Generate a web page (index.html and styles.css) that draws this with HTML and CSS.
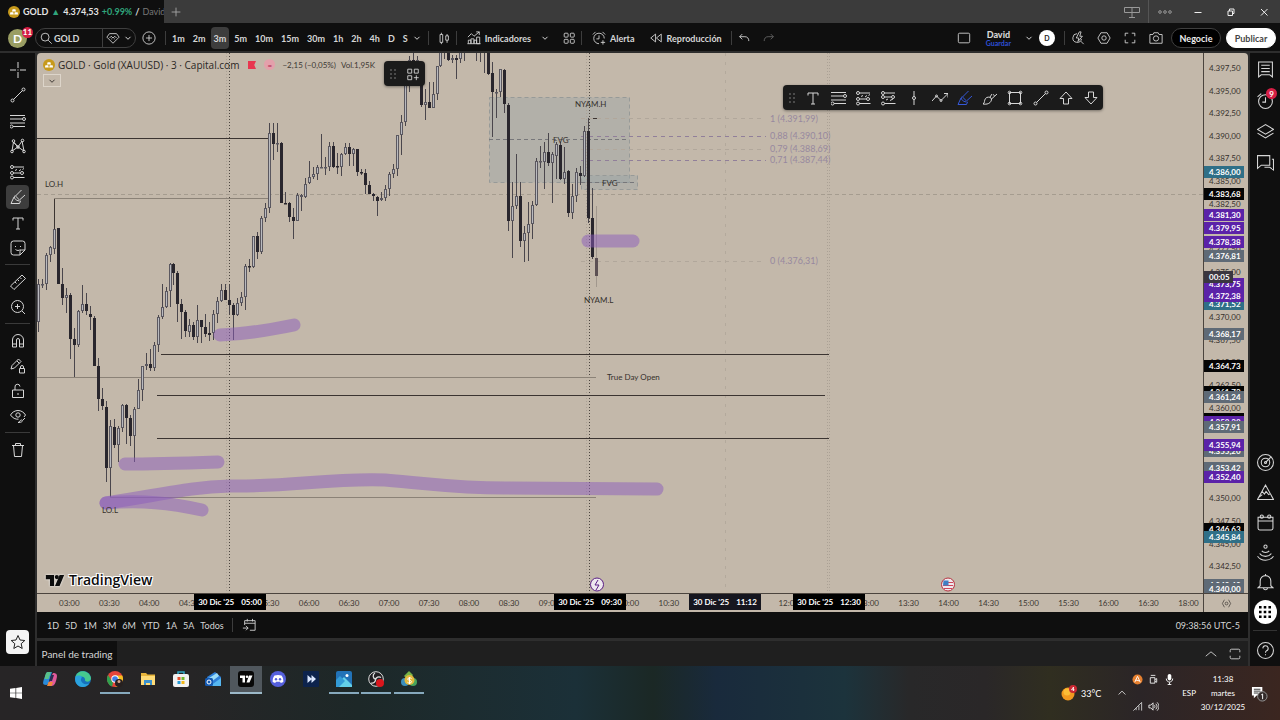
FILE: index.html
```html
<!DOCTYPE html>
<html lang="es">
<head>
  <meta charset="UTF-8">
  <meta name="viewport" content="width=device-width, initial-scale=1.0">
  <title>GOLD 4.374,53 +0.99% / David</title>
  <link rel="stylesheet" href="styles.css">
</head>
<body>
  <svg class="sprite" aria-hidden="true">
    <symbol id="chevron" viewBox="0 0 8 8"><path d="M1.5 2.8 4 5.3 6.5 2.8"/></symbol>
    <symbol id="coin" viewBox="0 0 12 12"><circle cx="6" cy="6" r="6" fill="#c79a1c" stroke="none"/><path d="M4.6 3.2h2.8L8 5.6H4zM2.4 6.2h2.8l.6 2.4H1.9zM6.8 6.2h2.8l.5 2.4H6.2z" fill="#fff" stroke="none"/></symbol>
    <symbol id="layout" viewBox="0 0 16 16"><rect x="2.5" y="2.5" width="4.5" height="4.5" rx="1"/><rect x="9.5" y="2.5" width="4.5" height="4.5" rx="1"/><rect x="2.5" y="9.5" width="4.5" height="4.5" rx="1"/><rect x="9.5" y="9.5" width="4.5" height="4.5" rx="1"/></symbol>
    <symbol id="text" viewBox="0 0 16 16"><path d="M3 5.5V3h10v2.5M8 3v11M6 14h4"/></symbol>
    <symbol id="trend" viewBox="0 0 16 16"><path d="m3.5 12.500 9-9"/><circle cx="2.500" cy="13.500" r="1.500"/><circle cx="13.500" cy="2.500" r="1.500"/></symbol>
    <symbol id="fib" viewBox="0 0 16 16"><path d="M0 2.500h15M0 6h12.500M0 10h15M3 13.500h12"/><circle cx="14" cy="6" r="1.500"/><circle cx="1.500" cy="13.500" r="1.500"/></symbol>
    <symbol id="position" viewBox="0 0 16 16"><path d="M3.500 3H14M3.500 9H10M3.500 13.500h11M5 6.500l2-1M9 7l2-1.500M12.500 5.500l1.500-1"/><circle cx="2" cy="3" r="1.500"/><circle cx="2" cy="9" r="1.500"/><circle cx="2" cy="13.500" r="1.500"/><circle cx="12" cy="9" r="1.500"/></symbol>
    <symbol id="marker" viewBox="0 0 16 16"><path d="M5.500 7 11.500 1M10 10.500l5-4.500M5 6.500c-1.500 2 0 5 4.500 5.500M4 8 1 14.500h8.500L10.500 12M5.500 7l4.500 4.500"/></symbol>
    <symbol id="brush" viewBox="0 0 16 16"><path d="M1 14c2-1 1-3.500 2.500-5.500S8 7 9 8s.5 3-1 4.500S4 14.500 1 14zM8 7l2-3M9.500 9l5.500-5M11 4.500l1.500 1"/></symbol>
    <symbol id="user-tv" viewBox="0 0 20 12"><path d="M0 0h9v12H4.500V4.500H0zM15 0h5l-5 12h-5z" stroke="none"/><circle cx="12" cy="2.300" r="2.300" stroke="none"/></symbol>
  </svg>

  <header class="tabs">
    <div class="tab">
      <svg class="coin"><use href="#coin"/></svg>
      <b>GOLD</b><i class="up">▲</i><b>4.374,53</b><b class="up">+0.99%</b><b>/</b><span class="fade">David</span>
    </div>
    <button class="new-tab" aria-label="Nueva pestaña"><svg class="icon" viewBox="0 0 16 16"><path d="M8 3v10M3 8h10"/></svg></button>
    <div class="window-buttons">
      <button aria-label="Disposición"><svg class="icon" viewBox="0 0 16 16"><path d="M.500 3.500h15v5H.500zM8 3.500v10M5 13.500h6"/></svg></button>
      <button class="edge" aria-label="Menú"><svg class="icon" viewBox="0 0 16 16"><circle cx="3" cy="8" r="1.300"/><circle cx="8" cy="8" r="1.300"/><circle cx="13" cy="8" r="1.300"/></svg></button>
      <button aria-label="Minimizar"><svg class="icon light" viewBox="0 0 16 16"><path d="M4.500 8.500h7"/></svg></button>
      <button aria-label="Restaurar"><svg class="icon light" viewBox="0 0 16 16"><path d="M5 7h4.500v4.500H5zM6.500 7V5H11v4.500H9.500"/></svg></button>
      <button aria-label="Cerrar"><svg class="icon light" viewBox="0 0 16 16"><path d="m5 5 6.500 6.500M11.500 5 5 11.500"/></svg></button>
    </div>
  </header>

  <div class="toolbar">
    <button class="avatar" aria-label="Perfil">D<span class="badge">11</span></button>
    <div class="search">
      <button><svg class="icon" viewBox="0 0 16 16"><circle cx="7" cy="7" r="4.500"/><path d="m10.500 10.500 4 4"/></svg>GOLD</button>
      <button class="gem" aria-label="Opciones"><svg class="icon" viewBox="0 0 16 16"><path d="M4 3h8l3 4-7 7-7-7zM4 8l2-2 2 2 2-2 2 2M6.500 8.500v1M9.500 8.500v1"/></svg><svg class="chev"><use href="#chevron"/></svg></button>
    </div>
    <button class="tool" aria-label="Comparar"><svg class="icon" viewBox="0 0 16 16"><circle cx="8" cy="8" r="7"/><path d="M8 4.500v7M4.500 8h7"/></svg></button>
    <span class="sep"></span>
    <div class="intervals">
      <button>1m</button><button>2m</button><button class="on">3m</button><button>5m</button><button>10m</button><button>15m</button><button>30m</button><button>1h</button><button>2h</button><button>4h</button><button>D</button><button>S</button>
    </div>
    <svg class="chev"><use href="#chevron"/></svg>
    <span class="sep"></span>
    <button class="tool" aria-label="Velas"><svg class="icon" viewBox="0 0 16 16"><path d="M3.500 4h3v9h-3zM5 2v2M5 13v2M10 5.500h3v5h-3zM11.500 3.500v2M11.500 10.500v3"/></svg></button>
    <span class="sep"></span>
    <button class="wide"><svg class="icon" viewBox="0 0 16 16"><path d="m1 7 4-4 3 3 6-5M10.500 1H14v3.500M1.500 14.500v-4h3v4M4.500 14.500V9H8v5.500M8 14.500v-4h3v4M11 14.500V7h3.500v7.500zM.500 14.500h15"/></svg>Indicadores</button>
    <svg class="chev"><use href="#chevron"/></svg>
    <button class="tool" aria-label="Plantillas"><svg class="icon"><use href="#layout"/></svg></button>
    <span class="sep"></span>
    <button class="wide"><svg class="icon" viewBox="0 0 16 16"><path d="M14 8.500A6 6 0 1 0 8 14.500M8 5v4H5M1 4l3-3M12 1l3 3M12.500 10.500v5M10 13h5"/></svg>Alerta</button>
    <button class="wide replay"><svg class="icon" viewBox="0 0 16 16"><path d="M7.500 3.500v9L2 8zM14 3.500v9L8.500 8z"/></svg>Reproducción</button>
    <span class="sep"></span>
    <button class="tool" aria-label="Deshacer"><svg class="icon" viewBox="0 0 16 16"><path d="M6 3.500 3 6.500l3 3M3 6.500h6c3 0 4.500 2 4.500 5"/></svg></button>
    <button class="tool dim" aria-label="Rehacer"><svg class="icon" viewBox="0 0 16 16"><path d="m10 3.500 3 3-3 3M13 6.500H7c-3 0-4.500 2-4.500 5"/></svg></button>

    <div class="toolbar-right">
      <button class="tool" aria-label="Cuadrícula"><svg class="icon" viewBox="0 0 16 16"><rect x="1.500" y="2.500" width="13" height="11" rx="1.500"/></svg></button>
      <button class="save"><b>David</b><span>Guardar</span></button>
      <svg class="chev"><use href="#chevron"/></svg>
      <button class="initial">D</button>
      <span class="sep"></span>
      <button class="tool" aria-label="Búsqueda rápida"><svg class="icon" viewBox="0 0 16 16"><path d="M7 3a5 5 0 1 0 5 6M11 11.500l3.500 3.500M9.500 1 6 8h3l-1 4 5-6h-3l1.500-5z"/></svg></button>
      <button class="tool" aria-label="Ajustes"><svg class="icon" viewBox="0 0 16 16"><path d="M4.500 2h7L15 8l-3.500 6h-7L1 8z"/><circle cx="8" cy="8" r="2.500"/></svg></button>
      <button class="tool" aria-label="Pantalla completa"><svg class="icon" viewBox="0 0 16 16"><path d="M2.500 6V2.500H6M10 2.500h3.500V6M13.500 10v3.500H10M6 13.500H2.500V10"/></svg></button>
      <button class="tool" aria-label="Captura"><svg class="icon" viewBox="0 0 16 16"><path d="M1 4h3.500l1-2h5l1 2H15v10H1z"/><circle cx="8" cy="8.500" r="3"/></svg></button>
      <button class="pill">Negocie</button>
      <button class="pill white">Publicar</button>
    </div>
  </div>

  <div class="workspace">
    <nav class="drawing">
      <div class="group main-tools">
        <button aria-label="Cruz"><svg class="icon" viewBox="0 0 16 16"><path d="M8 0v6M8 10v6M0 8h6M10 8h6M8 7.500v1"/></svg></button>
        <button aria-label="Línea de tendencia"><svg class="icon"><use href="#trend"/></svg></button>
        <button aria-label="Fibonacci"><svg class="icon"><use href="#fib"/></svg></button>
        <button aria-label="Patrones"><svg class="icon" viewBox="0 0 16 16"><path d="m2 13 1.500-9L8 9l4-6 2 10-6-4zM3.500 4 8 9"/><circle cx="2" cy="13.500" r="1.300"/><circle cx="3.500" cy="3" r="1.300"/><circle cx="12.500" cy="2.500" r="1.300"/><circle cx="14" cy="13.500" r="1.300"/><circle cx="8" cy="9" r="1.300"/></svg></button>
        <button aria-label="Posición"><svg class="icon"><use href="#position"/></svg></button>
        <button class="on" aria-label="Marcador"><svg class="icon"><use href="#marker"/></svg></button>
        <button aria-label="Texto"><svg class="icon"><use href="#text"/></svg></button>
        <button aria-label="Pegatinas"><svg class="icon" viewBox="0 0 16 16"><path d="M3.500 1h9A2.500 2.500 0 0 1 15 3.500V10l-5 5H3.500A2.500 2.500 0 0 1 1 12.500v-9A2.500 2.500 0 0 1 3.500 1zM15 10h-3.500a1.500 1.500 0 0 0-1.500 1.500V15M5.500 6v1M10.500 6v1M5.500 9.500c1.500 1.300 3.500 1.300 5 0"/></svg></button>
      </div>
      <div class="group">
        <button aria-label="Medir"><svg class="icon" viewBox="0 0 16 16"><path d="m.500 12 11.500-11L15.500 4.500 4 15.500zM5 8l1.500 1.500M7.500 5.500 9 7M10 3.500 11.500 5"/></svg></button>
        <button aria-label="Acercar"><svg class="icon" viewBox="0 0 16 16"><circle cx="7.500" cy="7.500" r="6"/><path d="m12 12 3 3M7.500 5v5M5 7.500h5"/></svg></button>
      </div>
      <div class="group">
        <button aria-label="Imán"><svg class="icon" viewBox="0 0 16 16"><path d="M2.500 14V7a5.500 5.500 0 0 1 11 0v7h-4V7a1.500 1.500 0 0 0-3 0v7zM2.500 11h4M9.500 11h4"/></svg></button>
        <button aria-label="Dibujo continuo"><svg class="icon" viewBox="0 0 16 16"><path d="m1 11 1-3.500L8.500 1 11 3.500 4.500 10zM7 3l2.500 2.500M9.500 10.500h5v4.500h-5zM10.500 10.500V9a1.500 1.500 0 0 1 3 0v1.500"/></svg></button>
        <button aria-label="Bloquear"><svg class="icon" viewBox="0 0 16 16"><path d="M2.500 7h11v7.500h-11zM5 7V4a2.500 2.500 0 0 1 5-.500M8 10v2"/></svg></button>
        <button aria-label="Ocultar"><svg class="icon" viewBox="0 0 16 16"><path d="M8.500 11.200C5.500 11.500 2.500 10 .500 7c3.500-6 11.500-6 15 0l-1.500 2M8 14.500c2 0 1.500-2.500 3.500-2.500s1.500 2.500-3.500 2.500zM13 12l2-2"/><circle cx="8" cy="7" r="2.200"/></svg></button>
      </div>
      <div class="group">
        <button aria-label="Eliminar"><svg class="icon" viewBox="0 0 16 16"><path d="M2 3.500h12M5.500 3.500V1.500h5v2M3.500 3.500l1 11h7l1-11"/></svg></button>
      </div>
      <button class="favorite" aria-label="Favoritos"><svg class="icon" viewBox="0 0 16 16"><path d="m8 1.500 2 4.500 4.800.500-3.600 3.200 1 4.800L8 12l-4.200 2.500 1-4.800L1.200 6.500 6 6z"/></svg></button>
    </nav>

    <main>
      <div class="chart-grid">
        <section class="chart">
          <svg class="plot" id="plot" viewBox="37 53 1166 540" preserveAspectRatio="xMinYMin slice">
            <g class="zones">
              <rect x="489.500" y="97.500" width="140" height="85"/>
              <rect x="581.500" y="175.500" width="56" height="14"/>
              <path d="M489 139.500h140M581 182.500h56"/>
            </g>
            <g class="sessions">
              <path d="M229.500 53v540M589.500 53v540"/>
              <path class="soft" d="M226.500 53v540M586.500 53v540M829.500 53v540M827.500 53v540"/>
              <path class="cross" d="M37 194.500h1166"/>
              <path class="faint" d="M725.500 53v540"/>
            </g>
            <g class="levels">
              <path d="M37 138.500h231M54.500 229V199M161 354.500h668M157 395.500h668M157 438.500h672M589 118.500h8"/>
              <path class="thin" d="M54 198.500h214M37 377.500h559M110 497.500h486"/>
            </g>
            <g class="retracement">
              <path d="M581 118.500h180M581 149.500h180M581 261.500h180"/>
              <path class="strong" d="M581 136.500h185M581 160.500h185"/>
              <text x="770" y="122">1 (4.391,99)</text>
              <text x="770" y="139">0,88 (4.390,10)</text>
              <text x="770" y="152">0,79 (4.388,69)</text>
              <text x="770" y="163">0,71 (4.387,44)</text>
              <text x="770" y="264">0 (4.376,31)</text>
            </g>
            <g id="candles"></g>
            <g class="highlighter">
              <path d="M220 335c26-1 50-5 74-10"/>
              <path d="M125 464c30 0 62-1 93-2"/>
              <path d="M106 503c54-8 84-16 124-17 60 1 100-8 155-6 50 4 70 8 120 8l152 1"/>
              <path d="M106 503c36-3 64 0 96 7"/>
              <path d="M588 241h45"/>
            </g>
            <g class="notes">
              <text x="45" y="187">LO.H</text>
              <text x="102" y="513">LO.L</text>
              <text x="575" y="107">NYAM.H</text>
              <text x="584" y="303">NYAM.L</text>
              <text x="553" y="143">FVG</text>
              <text x="602" y="186">FVG</text>
              <text x="607" y="380">True Day Open</text>
            </g>
            <g class="events">
              <circle cx="597" cy="584.500" r="6.500" stroke="#5b1f86"/>
              <path d="m598 580-3 5h4l-3 5" stroke="#5b1f86"/>
              <circle cx="948" cy="584.500" r="6.500" stroke="#b8323e"/>
              <path d="M944 582.500h9M943 585.500h10M944 588.500h8" stroke="#d0475a"/>
              <path d="M943.500 580.500h5v5h-5.500z" fill="#3e7fc4"/>
            </g>
          </svg>

          <div class="legend">
            <div class="legend-row">
              <svg class="coin"><use href="#coin"/></svg>
              <h1>GOLD · Gold (XAUUSD) · 3 · Capital.com</h1>
              <svg class="flag" viewBox="0 0 9 9"><path d="M0 0h9L7 4.500 9 9H0z"/></svg>
              <span class="equal">=</span>
              <span>−2,15 (−0,05%)</span>
              <span>Vol.1,95K</span>
            </div>
            <button class="collapse" aria-label="Contraer"><svg class="chev"><use href="#chevron"/></svg></button>
          </div>

          <div class="floating favorites">
            <span class="grip"></span>
            <button aria-label="Diseños"><svg class="icon" viewBox="0 0 16 16"><path d="M2 2.500h4.500V7H2zM9.500 2.500H14V7H9.500zM2 10h4.500v4.500H2zM11.800 9.500v5.500M9 12.200h5.500"/></svg></button>
          </div>

          <div class="floating tools">
            <span class="grip"></span>
            <button aria-label="Texto"><svg class="icon"><use href="#text"/></svg></button>
            <button aria-label="Fibonacci"><svg class="icon"><use href="#fib"/></svg></button>
            <button aria-label="Posición larga"><svg class="icon"><use href="#position"/></svg></button>
            <button aria-label="Posición corta"><svg class="icon" viewBox="0 0 16 16"><path d="M3.500 3H14M3.500 7H10M3.500 13.500h11M5 10l2-1M9 10.500l3-1.500"/><circle cx="2" cy="3" r="1.500"/><circle cx="2" cy="7" r="1.500"/><circle cx="2" cy="13.500" r="1.500"/><circle cx="12" cy="7" r="1.500"/></svg></button>
            <button aria-label="Línea vertical"><svg class="icon" viewBox="0 0 16 16"><path d="M8 1v5.500M8 9.500V15"/><circle cx="8" cy="8" r="1.500"/></svg></button>
            <button aria-label="Trayectoria"><svg class="icon" viewBox="0 0 16 16"><path d="m0 11 4.500-5L9 10.500 15.500 4M12 3.500h4v4"/><circle cx="4.500" cy="6" r="1"/><circle cx="9" cy="10.500" r="1"/></svg></button>
            <button class="active" aria-label="Marcador"><svg class="icon"><use href="#marker"/></svg></button>
            <button aria-label="Pincel"><svg class="icon"><use href="#brush"/></svg></button>
            <button aria-label="Rectángulo"><svg class="icon" viewBox="0 0 16 16"><path d="M2.500 2.500h11v11h-11z"/><circle cx="2.500" cy="2.500" r="1.300"/><circle cx="13.500" cy="2.500" r="1.300"/><circle cx="2.500" cy="13.500" r="1.300"/><circle cx="13.500" cy="13.500" r="1.300"/></svg></button>
            <button aria-label="Línea de tendencia"><svg class="icon"><use href="#trend"/></svg></button>
            <button aria-label="Flecha arriba"><svg class="icon" viewBox="0 0 16 16"><path d="m8 2 6 6.500h-3.500V14h-5V8.500H2z"/></svg></button>
            <button aria-label="Flecha abajo"><svg class="icon" viewBox="0 0 16 16"><path d="m8 14 6-6.500h-3.500V2h-5v5.500H2z"/></svg></button>
          </div>

          <a class="brand" href="#"><svg><use href="#user-tv"/></svg>TradingView</a>
        </section>

        <svg class="prices" id="prices" viewBox="1204 53 44 540" preserveAspectRatio="xMinYMin slice"></svg>

        <div class="times">
          <span>03:00</span><span>03:30</span><span>04:00</span><span>04:30</span><span>05:00</span><span>05:30</span><span>06:00</span><span>06:30</span><span>07:00</span><span>07:30</span><span>08:00</span><span>08:30</span><span>09:00</span><span>09:30</span><span>10:00</span><span>10:30</span><span>11:00</span><span>11:30</span><span>12:00</span><span>12:30</span><span>13:00</span><span>13:30</span><span>14:00</span><span>14:30</span><span>15:00</span><span>15:30</span><span>16:00</span><span>16:30</span><span>18:00</span>
          <div class="time-tag at-0500"><span>30 Dic '25</span><span>05:00</span></div>
          <div class="time-tag at-0930"><span>30 Dic '25</span><span>09:30</span></div>
          <div class="time-tag at-1112"><span>30 Dic '25</span><span>11:12</span></div>
          <div class="time-tag at-1230"><span>30 Dic '25</span><span>12:30</span></div>
        </div>
        <button class="axis-settings" aria-label="Ajustes del eje"><svg class="icon" viewBox="0 0 16 16"><path d="M5 2.500 2 8l3 5.500M11 2.500 14 8l-3 5.500"/><circle cx="8" cy="8" r="2"/></svg></button>
      </div>

      <div class="ranges">
        <button>1D</button><button>5D</button><button>1M</button><button>3M</button><button>6M</button><button>YTD</button><button>1A</button><button>5A</button><button>Todos</button>
        <span class="sep"></span>
        <button aria-label="Ir a"><svg class="icon" viewBox="0 0 16 16"><path d="M3 8V3h12v11H9M3 6h12M6 1v3M12 1v3M1 11.500h6M4.500 9 7 11.500 4.500 14"/></svg></button>
        <span class="clock">09:38:56 UTC-5</span>
      </div>

      <div class="panel">
        <button class="panel-tab">Panel de trading</button>
        <button class="panel-icon" aria-label="Expandir"><svg class="icon" viewBox="0 0 16 16"><path d="m2 10.500 6-5 6 5"/></svg></button>
        <button class="panel-icon" aria-label="Maximizar"><svg class="icon" viewBox="0 0 16 16"><path d="M2.500 6V4a1.500 1.500 0 0 1 1.500-1.500h8A1.500 1.500 0 0 1 13.500 4v2M13.500 10v2a1.500 1.500 0 0 1-1.500 1.500H4A1.500 1.500 0 0 1 2.500 12v-2"/></svg></button>
      </div>
    </main>

    <aside class="widgets">
      <button aria-label="Lista"><svg class="icon" viewBox="0 0 16 16"><path d="M1.500 1h13v14l-2.500-2H4l-2.500 2zM4 4h8M4 7h8M4 10h8"/></svg></button>
      <button aria-label="Alertas"><svg class="icon" viewBox="0 0 16 16"><circle cx="8" cy="9" r="6.500"/><path d="M8 5v4.500H5M.500 4.500 4 1.500M12 1.500l3.500 3"/></svg><span class="badge">9</span></button>
      <button aria-label="Objetos"><svg class="icon" viewBox="0 0 16 16"><path d="m.500 6 7.500-4.500L15.500 6 8 10.500zM.500 9.500 8 14l7.500-4.500"/></svg></button>
      <button aria-label="Chats"><svg class="icon" viewBox="0 0 16 16"><path d="M.500 1.500h11.500v9H4l-3.500 3zM14 5h1.500v10L12 12.500H7"/></svg></button>
      <div class="lower">
        <button aria-label="Radar"><svg class="icon" viewBox="0 0 16 16"><circle cx="8" cy="8" r="7.500"/><circle cx="8" cy="8" r="4"/><circle cx="8" cy="8" r="1"/><path d="m8 8 5-5"/></svg></button>
        <button aria-label="Pine"><svg class="icon" viewBox="0 0 16 16"><path d="m8 1 7.500 13.500H.500zM4.800 7l2.200 2.500L8.500 7l2.500 3 1-.500M1 13l4-3"/></svg></button>
        <button aria-label="Calendario"><svg class="icon" viewBox="0 0 16 16"><path d="M1 3h14v10.500a1.500 1.500 0 0 1-1.500 1.500h-11A1.500 1.500 0 0 1 1 13.500zM1 6.500h14"/><circle cx="4.500" cy="2.500" r="1.500"/><circle cx="11.500" cy="2.500" r="1.500"/></svg></button>
        <button aria-label="Transmisiones"><svg class="icon" viewBox="0 0 16 16"><circle cx="8" cy="2.500" r="1.500"/><path d="M4.500 6.500c1.500 2 5.500 2 7 0M2.500 9c2.500 3.500 8.500 3.500 11 0M.500 11.500c3.500 5 11.500 5 15 0"/></svg></button>
        <button aria-label="Notificaciones"><svg class="icon" viewBox="0 0 16 16"><path d="M3 11V6.500a5 5 0 0 1 10 0V11l2 2H1zM6 13c.5 2.500 3.500 2.500 4 0M8 1.500V0"/></svg></button>
        <button class="apps" aria-label="Productos"><svg viewBox="0 0 14 14"><path d="M0 0h3v3H0zM5.500 0h3v3h-3zM11 0h3v3h-3zM0 5.500h3v3H0zM5.500 5.500h3v3h-3zM11 5.500h3v3h-3zM0 11h3v3H0zM5.500 11h3v3h-3zM11 11h3v3h-3z"/></svg></button>
        <button class="help" aria-label="Ayuda"><svg class="icon" viewBox="0 0 16 16"><circle cx="8" cy="8" r="7.500"/><path d="M5.500 6a2.500 2.500 0 1 1 3.500 2.300c-.7.400-1 .8-1 1.700M8 11.500v1"/></svg></button>
      </div>
    </aside>
  </div>

  <footer class="taskbar">
    <button class="start" aria-label="Inicio"><svg viewBox="0 0 12 12"><path d="M0 1.700 5.500 1v4.700H0zM6.200.900 12 0v5.700H6.200zM0 6.300h5.500V11L0 10.300zM6.200 6.300H12V12l-5.800-.900z" fill="#fff"/></svg></button>
    <div class="apps-row">
      <button aria-label="Copilot"><svg viewBox="0 0 16 16"><path d="M5 1h5l-3 10c-.5 2-1.500 3-3 3-4 0-3-3-2-6z" fill="#2a8ad8"/><path d="M3 5c1-4 2-4 4-4h2L6.500 8H2.500z" fill="#58c08a"/><path d="M11 2c4 0 4.500 2 3.500 6s-2 7-5 7H6l3-9z" fill="#e05a9a"/><path d="M6.500 11H11l-1.500 4H5z" fill="#f08a3c"/><path d="M9 4h3l-2 6H7z" fill="#2c2d52"/></svg></button>
      <button aria-label="Edge"><svg viewBox="0 0 16 16"><circle cx="8" cy="8" r="8" fill="#1672bd"/><path d="M.500 6C2-1.500 14-2 16 7c0 4-5 4.500-6 2.500.5-3-1.500-4-4-4-2 0-4 1-5.500.500z" fill="#46c98e"/><path d="M.200 6.500C1 4.500 4 4 6 5s-.5 2 0 4.500 4 5 8 3c-2 3-5 4-8 3.300C2 15-.500 11 .200 6.500z" fill="#2ba2de"/></svg></button>
      <button class="running" aria-label="Chrome"><svg viewBox="0 0 16 16"><circle cx="8" cy="8" r="8" fill="#e6453a"/><path d="M1.100 4 6 12l-1 3.500A8 8 0 0 1 1.100 4z" fill="#2fa14f"/><path d="M8 4.500h7.200A8 8 0 0 1 8.500 16L11 9.500z" fill="#f4c020"/><circle cx="8" cy="8" r="3.700" fill="#fff"/><circle cx="8" cy="8" r="2.800" fill="#3f7fe8"/><circle cx="12" cy="12" r="4" fill="#27201f"/><circle cx="12" cy="10.500" r="1.500" fill="#d6a58a"/></svg></button>
      <button aria-label="Explorador"><svg viewBox="0 0 16 16"><path d="M1 2h5l1.500 1.500H15V14H1z" fill="#e8b53c"/><path d="M1 5h14v9H1z" fill="#ffdc78"/><path d="M4 9h8v5h-2v-2H6v2H4z" fill="#3b92cf"/></svg></button>
      <button aria-label="Store"><svg viewBox="0 0 16 16"><path d="M5 4V1h6v3" fill="none" stroke="#31a6c4" stroke-width="1.500"/><rect y="3" width="16" height="13" rx="2" fill="#f2f2f2"/><path d="M4.500 6h3v3h-3z" fill="#e5502f"/><path d="M8.500 6h3v3h-3z" fill="#74b72c"/><path d="M4.500 10h3v3h-3z" fill="#259ad6"/><path d="M8.500 10h3v3h-3z" fill="#f2b818"/></svg></button>
      <button aria-label="Outlook"><svg viewBox="0 0 16 16"><path d="M2 6 10 1l6 5v9H5z" fill="#2d7fd8"/><path d="m4 7 8-5 2 3-8 6z" fill="#9adcf8"/><path d="m5 15 11-8v8z" fill="#56b7f0"/><rect y="7" width="8" height="8" rx="1.500" fill="#1459b0"/><circle cx="4" cy="11" r="2" fill="none" stroke="#fff"/></svg></button>
      <button class="running selected" aria-label="TradingView"><svg viewBox="0 0 16 16"><rect width="16" height="16" rx="3" fill="#080808"/><path d="M2 4.500h5v7H4.500V7H2zM11 4.500h3.500l-3 7H8.500z" fill="#fff"/><circle cx="9" cy="5.800" r="1.300" fill="#fff"/></svg></button>
      <button aria-label="Discord"><svg viewBox="0 0 16 16"><circle cx="8" cy="8" r="8" fill="#5560dc"/><path d="M4.500 4.500C7 3.700 9 3.700 11.500 4.500c1.500 2 2 4 1.800 6.500l-2.500 1-.8-1.200H6L5.200 12l-2.500-1C2.500 8.500 3 6.500 4.500 4.500z" fill="#fff"/><circle cx="6" cy="8.300" r="1.200" fill="#5560dc"/><circle cx="10" cy="8.300" r="1.200" fill="#5560dc"/></svg></button>
      <button aria-label="Editor"><svg viewBox="0 0 16 16"><rect width="16" height="16" rx="1" fill="#0d234c"/><path d="M4.500 4 9 8l-4.500 4zM8.500 4 13 8l-4.500 4z" fill="#dce8ff"/></svg></button>
      <button class="running" aria-label="Fotos"><svg viewBox="0 0 16 16"><rect width="16" height="16" rx="2" fill="#2273b8"/><path d="M0 14 8 6l8 8v2H0z" fill="#63d0e8"/><path d="m0 9 4-4 5 5-6 6H0z" fill="#339bd6"/><circle cx="11" cy="4.500" r="1.500" fill="#fff"/></svg></button>
      <button class="running" aria-label="OBS"><svg viewBox="0 0 16 16"><circle cx="8" cy="8" r="7.300" fill="#201f22" stroke="#ddd"/><path d="M7 2a3.500 3.500 0 0 0 1 6.500M13 6.500A3.500 3.500 0 0 0 7.500 9M3 12a3.500 3.500 0 0 0 4.500-4" fill="none" stroke="#ddd" stroke-width="1.300"/><circle cx="12" cy="12" r="4" fill="#dc161c"/></svg></button>
      <button class="running" aria-label="MetaTrader"><svg viewBox="0 0 16 16"><path d="m8 0 4 4-4 6-5-5z" fill="#75b447"/><circle cx="4" cy="11" r="4" fill="#3c8fbb"/><circle cx="12" cy="11" r="4" fill="#48a35b"/><circle cx="8.500" cy="9" r="5" fill="#e3b93d"/><path d="M10.500 7.500c-1-1-4-.8-3.800.7s3.800.8 3.800 2.500-3 1.800-4 .600M8.500 6v7" fill="none" stroke="#fff"/></svg></button>
    </div>
    <div class="tray">
      <svg class="weather" viewBox="0 0 16 16"><circle cx="7" cy="9" r="6.500" fill="#f29a1f"/><circle cx="6" cy="7" r="3.500" fill="#fbbd36"/><circle cx="12" cy="4" r="4" fill="#c92832"/><path d="M12.500 6V2l-2 2.800h3" fill="none" stroke="#fff" stroke-width=".8"/></svg>
      <span>33°C</span>
      <svg class="icon tray-up" viewBox="0 0 16 16"><path d="m3.500 10 4.500-4.500 4.500 4.500"/></svg>
      <div class="tray-icons">
        <svg viewBox="0 0 12 12"><circle cx="6" cy="6" r="5.500" fill="#e7802f"/><path d="M3 9 6 2.500 9 9M4 6.500l4 1" fill="none" stroke="#fff"/></svg>
        <svg viewBox="0 0 12 12"><path d="M2.500 4h5v6h-5zM7.500 6l2-1v4l-2-1M3 1.500h5" fill="none" stroke="#eee"/></svg>
        <svg viewBox="0 0 12 12"><rect x="4" y="0" width="4" height="7" rx="2" fill="#fff"/><path d="M2.500 5c0 5 7 5 7 0M6 9v2.500M4 11.500h4" fill="none" stroke="#fff"/></svg>
        <svg viewBox="0 0 12 12"><path d="M1.500 10.500 10.500 1.500v9M4.500 10V7.500M7.500 10V5" fill="none" stroke="#ccc"/></svg>
        <svg viewBox="0 0 12 12"><path d="M1 4.500h2L5.500 2v8L3 7.500H1zM7 4.500c.8 1 .8 2 0 3M8.500 3c1.800 2 1.800 4 0 6M10 1.500c2.500 3 2.500 6 0 9" fill="none" stroke="#eee"/></svg>
      </div>
      <span class="lang">ESP</span>
      <div class="date"><span>11:38</span><span>martes</span><span>30/12/2025</span></div>
      <svg class="notice" viewBox="0 0 18 18"><path d="M1 2h11v9H6l-3 3v-3H1z" fill="#fff"/><path d="M3 4.500h7M3 6.500h7M3 8.500h5" stroke="#333" fill="none"/><circle cx="12" cy="12" r="5" fill="#332a29" stroke="#999"/><path d="m10.800 10.500 1.500-1V15" stroke="#fff" fill="none"/></svg>
    </div>
  </footer>

  <script src="script.js"></script>
</body>
</html>
```
FILE: styles.css
```css
* {
  box-sizing: border-box;
}
body {
  margin: 0;
  height: 100vh;
  min-height: 640px;
  display: flex;
  flex-direction: column;
  overflow: hidden;
  background: #2e2e2e;
  color: #d6d6d6;
  font-family: Lato, "Open Sans", sans-serif;
  font-size: 9px;
}
button {
  display: flex;
  align-items: center;
  justify-content: center;
  padding: 0;
  border: none;
  background: none;
  color: inherit;
  font: inherit;
  cursor: pointer;
}
svg {
  display: block;
  flex: none;
}
.sprite {
  position: absolute;
  width: 0;
  height: 0;
}
.icon {
  width: 16px;
  height: 16px;
  fill: none;
  stroke: currentColor;
  stroke-width: 1;
}
.chev {
  width: 8px;
  height: 8px;
  fill: none;
  stroke: currentColor;
}
.coin {
  width: 12px;
  height: 12px;
}
.sep {
  width: 1px;
  height: 14px;
  background: #3d3d3d;
}
.badge {
  position: absolute;
  display: flex;
  align-items: center;
  justify-content: center;
  width: 11px;
  height: 11px;
  border-radius: 50%;
  background: #d61f45;
  color: #fff;
  font-size: 8px;
  font-weight: bold;
}

/* window tabs */
.tabs {
  flex: none;
  display: flex;
  align-items: center;
  height: 23px;
  background: #3b3b3b;
}
.tab {
  display: flex;
  align-items: center;
  gap: 3px;
  width: 164px;
  height: 23px;
  padding: 0 8px;
  background: #0f0f0f;
  overflow: hidden;
  white-space: nowrap;
  color: #e4e4e4;
}
.tab .up {
  color: #2fa57c;
  font-style: normal;
}
.tab .fade {
  color: #777;
}
.new-tab {
  width: 24px;
  color: #a8a8a8;
}
.new-tab .icon {
  width: 14px;
  height: 14px;
}
.window-buttons {
  display: flex;
  margin-left: auto;
  color: #999;
}
.window-buttons button {
  width: 33px;
  height: 23px;
}
.window-buttons .edge {
  border-left: 1px solid #555;
}
.window-buttons .light {
  color: #eee;
}

/* top toolbar */
.toolbar {
  flex: none;
  display: flex;
  align-items: center;
  height: 28px;
  padding: 2px 4px 0 8px;
  background: #0f0f0f;
  font-weight: bold;
  white-space: nowrap;
}
.toolbar .icon {
  width: 14px;
  height: 14px;
}
.avatar {
  position: relative;
  width: 19px;
  height: 19px;
  border-radius: 50%;
  background: #9a9e63;
  color: #fff;
  font-size: 12px;
}
.avatar .badge {
  top: -2px;
  right: -6px;
}
.search {
  display: flex;
  align-items: center;
  width: 101px;
  height: 20px;
  margin: 0 6px 0 8px;
  border: 1px solid #3f3f3f;
  border-radius: 10px;
}
.search button {
  gap: 4px;
  flex: 1;
  height: 18px;
}
.search button:first-child {
  flex: 2;
  gap: 1px;
  justify-content: flex-start;
  padding-left: 3px;
}
.search .gem {
  border-left: 1px solid #3f3f3f;
}
.tool {
  width: 14px;
  height: 20px;
  margin: 0 5px;
}
.search + .tool {
  margin: 0 9px 0 0;
}
.intervals {
  display: flex;
  gap: 2px;
  padding: 0 2px 0 3px;
}
.intervals button {
  height: 22px;
  padding: 0 3px;
  border-radius: 4px;
}
.intervals .on {
  background: #3d3d3d;
}
.chev + .sep {
  margin: 0 3px 0 7px;
}
.wide {
  gap: 4px;
  margin: 0 10px;
}
.wide + .chev {
  margin-right: 8px;
}
.replay {
  margin: 0 9px 0 4px;
}
.tool.dim {
  color: #666;
  margin-left: 6px;
}
.toolbar-right {
  display: flex;
  align-items: center;
  margin-left: auto;
}
.toolbar-right .tool {
  margin: 0 6px;
}
.toolbar-right .chev + .initial {
  margin: 0 9px 0 6px;
}
.save {
  flex-direction: column;
  margin: 0 14px 0 9px;
  line-height: 10px;
}
.save span {
  color: #2d50d8;
  font-size: 7px;
  line-height: 7px;
}
.initial {
  width: 16px;
  height: 16px;
  border-radius: 50%;
  background: #fff;
  color: #222;
  font-size: 7px;
}
.pill {
  width: 50px;
  height: 20px;
  margin-left: 2px;
  border: 1px solid #3f3f3f;
  border-radius: 10px;
  background: #000;
  color: #eee;
}
.pill.white {
  margin-left: 5px;
  border-color: #fff;
  background: #fff;
  color: #444;
}

/* workspace */
.workspace {
  flex: 1;
  min-height: 0;
  display: flex;
  gap: 2px;
  padding-top: 2px;
}
.drawing {
  flex: none;
  display: flex;
  flex-direction: column;
  align-items: center;
  width: 35px;
  padding: 5px 0 12px;
  background: #0f0f0f;
}
.drawing button {
  width: 23px;
  height: 24px;
  border-radius: 4px;
}
.drawing .on {
  background: #3d3d3d;
}
.group {
  display: flex;
  flex-direction: column;
  align-items: center;
  gap: 1px;
  width: 25px;
  padding: 5px 0 4px;
  border-bottom: 1px solid #3a3a3a;
}
.group:nth-child(4) {
  border: none;
}
.main-tools {
  min-height: 207px;
  padding-top: 0;
  justify-content: space-between;
  gap: 0;
}
.drawing .favorite {
  margin-top: auto;
  background: #f4f4f4;
  color: #222;
}
main {
  flex: 1;
  min-width: 0;
  display: flex;
  flex-direction: column;
}
.chart-grid {
  flex: 1;
  min-height: 0;
  display: grid;
  grid-template-columns: 1fr 45px;
  grid-template-rows: 1fr 19px;
  border-radius: 4px 4px 0 0;
  background: #c3b8aa;
  color: #3c3733;
  overflow: hidden;
}
.chart {
  position: relative;
  min-width: 0;
  min-height: 0;
  overflow: hidden;
}
.plot,
.prices {
  width: 100%;
  height: 100%;
}
.plot {
  position: absolute;
}
.prices {
  border-left: 1px solid #4b443e;
  min-height: 0;
}
.plot text,
.prices text {
  font-size: 8px;
  fill: #36312d;
}
.zones {
  fill: rgba(150, 163, 168, .38);
  stroke: #979a98;
  stroke-dasharray: 4 3;
}
.zones path {
  fill: none;
  stroke: #77777a;
}
.sessions path {
  stroke: #4a443e;
  stroke-dasharray: 1 2;
}
.sessions .soft {
  stroke: #aba195;
}
.sessions .cross {
  stroke: #a59c8f;
  stroke-dasharray: 4 3;
}
.sessions .faint {
  stroke: #b3a99c;
  stroke-dasharray: 3 6;
}
.levels {
  fill: none;
  stroke: #3b3431;
}
.levels .thin {
  stroke: #8b8277;
}
.retracement {
  fill: none;
  stroke: #b1a79b;
  stroke-dasharray: 4 4;
}
.retracement .strong {
  stroke: #917f9a;
}
.plot .retracement text {
  stroke: none;
  font-size: 9px;
  fill: #97889f;
}
.highlighter path {
  fill: none;
  stroke: rgba(140, 92, 188, .5);
  stroke-width: 13;
  stroke-linecap: round;
}
.wick {
  stroke: #4a464c;
}
.up-body {
  fill: #b9babf;
  stroke: #5b5860;
}
.down-body {
  fill: #29262d;
  stroke: #29262d;
}
.live .wick {
  stroke: #a1978d;
}
.live .down-body {
  fill: #5c5054;
  stroke: #5c5054;
}
.events circle {
  fill: #eee8ee;
}
.events path {
  fill: none;
}
.events path[fill] {
  fill: #3e7fc4;
}

/* legend and floating bars */
.legend {
  position: absolute;
  top: 5px;
  left: 6px;
}
.legend-row {
  display: flex;
  align-items: center;
  height: 13px;
  white-space: nowrap;
  font-size: 8px;
}
.legend h1 {
  margin: 0 9px 0 3px;
  font-family: "Open Sans", sans-serif;
  font-size: 10px;
  font-weight: normal;
  color: #2b2724;
}
.flag {
  width: 8px;
  height: 8px;
  fill: #e8364f;
}
.equal {
  display: flex;
  align-items: center;
  justify-content: center;
  width: 11px;
  height: 11px;
  margin: 0 7px 0 8px;
  border-radius: 50%;
  background: #e3a0ab;
  color: #b0204a;
}
.legend-row span + span {
  margin-right: 5px;
}
.collapse {
  width: 18px;
  height: 13px;
  margin-top: 3px;
  border: 1px solid #ddd5ca;
}
.floating {
  position: absolute;
  display: flex;
  align-items: center;
  height: 25px;
  border-radius: 4px;
  background: #1b1b1b;
  color: #d6d6d6;
  box-shadow: 0 1px 3px rgba(0, 0, 0, .4);
}
.favorites {
  top: 8px;
  left: 347px;
  width: 41px;
  justify-content: space-between;
  padding: 0 5px;
}
.favorites .icon {
  width: 14px;
  height: 14px;
}
.tools {
  top: 32px;
  left: 746px;
  width: 320px;
  justify-content: space-between;
  padding: 0 4px 0 5px;
}
.tools .active {
  color: #3558d8;
}
.grip {
  width: 8px;
  height: 12px;
  background: radial-gradient(circle, #4a4a4a 1px, transparent 1px);
  background-size: 4px 4px;
}
.brand {
  position: absolute;
  left: 8px;
  bottom: 5px;
  display: flex;
  align-items: center;
  gap: 4px;
  color: #0c0c0c;
  font-family: "Open Sans", sans-serif;
  font-size: 14px;
  line-height: 16px;
  font-weight: 600;
  text-decoration: none;
  text-shadow: 1px 1px #fff, -1px 1px #fff, 1px -1px #fff, -1px -1px #fff;
}
.brand svg {
  width: 20px;
  height: 11px;
  fill: #0c0c0c;
  overflow: visible;
  filter: drop-shadow(0 0 1px #fff);
}

/* time axis */
.times {
  position: relative;
  display: flex;
  align-items: center;
  justify-content: space-between;
  padding: 0 4px 0 22px;
  border-top: 1px solid #4b443e;
  font-size: 8px;
}
.time-tag {
  position: absolute;
  top: 0;
  display: flex;
  align-items: center;
  justify-content: center;
  gap: 7px;
  width: 72px;
  height: 16px;
  background: #000;
  color: #fff;
  font-weight: bold;
}
.at-0500 { left: 157px; }
.at-0930 { left: 517px; }
.at-1112 { left: 652px; background: #16161f; }
.at-1230 { left: 756px; }
.axis-settings {
  border-top: 1px solid #4b443e;
  border-left: 1px solid #4b443e;
}
.axis-settings .icon {
  width: 11px;
  height: 11px;
}

/* bottom bars */
.ranges {
  flex: none;
  display: flex;
  align-items: center;
  gap: 6px;
  height: 26px;
  padding: 0 8px 0 10px;
  background: #0f0f0f;
}
.ranges .sep {
  margin: 0 3px 0 2px;
}
.ranges .icon {
  width: 14px;
  height: 14px;
}
.clock {
  margin-left: auto;
}
.panel {
  flex: none;
  display: flex;
  align-items: center;
  height: 25px;
  margin-top: 3px;
  padding-right: 6px;
  background: #1f1f1f;
}
.panel-tab {
  width: 80px;
  height: 25px;
  margin-right: auto;
  background: #0f0f0f;
  font-size: 10px;
}
.panel-icon {
  width: 14px;
  margin-left: 10px;
}
.panel-icon .icon {
  width: 14px;
  height: 14px;
}

/* right widgets */
.widgets {
  flex: none;
  display: flex;
  flex-direction: column;
  align-items: center;
  gap: 7px;
  width: 30px;
  padding: 4px 0;
  background: #0f0f0f;
}
.widgets button {
  position: relative;
  width: 24px;
  height: 24px;
}
.widgets .badge {
  top: 0;
  right: 0;
}
.lower {
  display: flex;
  flex-direction: column;
  align-items: center;
  gap: 6px;
  margin-top: auto;
}
.widgets .apps {
  width: 23px;
  border-radius: 50%;
  background: #fff;
}
.apps svg {
  width: 12px;
  height: 12px;
}
.lower .help {
  height: 32px;
  padding-top: 7px;
  border-top: 1px solid #333;
}
.widgets .icon {
  width: 17px;
  height: 17px;
}

/* taskbar */
.taskbar {
  flex: none;
  display: flex;
  height: 54px;
  background: linear-gradient(90deg, #272526 0%, #262526 15%, #1d2828 28%, #1b3038 45%, #1b2825 51%, #192a3c 56%, #1c333c 66%, #282829 71%, #2a2728 77%, #302e20 82%, #2b2527 89%, #3b2620 100%);
  color: #fff;
}
.start {
  width: 32px;
}
.start svg {
  width: 12px;
  height: 12px;
}
.apps-row {
  display: flex;
  justify-content: space-between;
  width: 391px;
  margin-left: 2px;
}
.apps-row button {
  width: 32px;
  height: 28px;
  border-bottom: 2px solid transparent;
}
.apps-row svg {
  width: 16px;
  height: 16px;
}
.apps-row .running {
  border-image: linear-gradient(90deg, transparent 9%, #86a9bd 9%, #86a9bd 91%, transparent 91%) 2;
}
.apps-row .selected {
  background: #50575d;
  border-image: none;
  border-color: #9cb9c9;
}
.tray {
  display: flex;
  align-items: center;
  margin-left: auto;
  padding-right: 12px;
}
.weather {
  width: 16px;
  height: 16px;
  margin-right: 4px;
}
.tray-up {
  width: 12px;
  height: 12px;
  margin: 0 4px 0 15px;
}
.tray-icons {
  display: grid;
  grid-template-columns: repeat(3, 11px);
  gap: 16px 5px;
  margin-right: 7px;
}
.tray-icons svg {
  width: 11px;
  height: 11px;
}
.lang {
  font-size: 8px;
}
.date {
  display: flex;
  flex-direction: column;
  align-items: center;
  width: 42px;
  margin: 0 7px 0 6px;
  font-size: 8px;
  line-height: 14px;
}
.notice {
  width: 17px;
  height: 17px;
}
```
FILE: script.js
```js
const SVG = 'http://www.w3.org/2000/svg';

// [high, top, bottom, low, up]
const candles = [
  [279, 284, 322, 332, 1], [279, 284, 285, 288, 1], [253, 255, 284, 290, 1], [246, 247, 255, 262, 1],
  [229, 229, 249, 254, 1], [228, 228, 284, 284, 0], [268, 284, 298, 305, 0], [288, 295, 298, 313, 1],
  [293, 295, 339, 359, 0], [328, 339, 345, 377, 0], [310, 311, 345, 347, 1], [285, 304, 311, 313, 1],
  [293, 304, 311, 315, 0], [306, 314, 317, 330, 0], [316, 318, 366, 366, 0], [358, 366, 399, 411, 0],
  [388, 399, 406, 410, 0], [401, 407, 468, 482, 0], [420, 426, 468, 497, 1], [419, 427, 445, 448, 0],
  [426, 428, 445, 462, 1], [404, 405, 428, 432, 1], [404, 405, 418, 444, 0], [415, 418, 436, 446, 0],
  [407, 409, 436, 462, 1], [379, 390, 409, 409, 1], [366, 366, 390, 401, 1], [353, 364, 366, 370, 1],
  [349, 364, 368, 371, 0], [342, 345, 368, 371, 1], [315, 317, 345, 352, 1], [284, 307, 317, 319, 1],
  [287, 291, 307, 308, 1], [263, 264, 291, 307, 1], [263, 264, 273, 285, 0], [271, 273, 304, 322, 0],
  [299, 304, 312, 339, 0], [310, 312, 331, 337, 0], [319, 325, 332, 337, 1], [322, 325, 337, 340, 0],
  [305, 320, 337, 343, 1], [320, 320, 327, 343, 0], [314, 327, 334, 337, 0], [322, 333, 335, 341, 0],
  [310, 314, 333, 340, 1], [297, 301, 314, 323, 1], [284, 290, 301, 302, 1], [284, 290, 300, 300, 0],
  [285, 300, 305, 314, 0], [303, 305, 315, 340, 0], [298, 303, 315, 316, 1], [292, 297, 303, 306, 1],
  [264, 266, 297, 310, 1], [259, 266, 267, 272, 0], [236, 236, 267, 268, 1], [232, 236, 252, 259, 0],
  [216, 218, 252, 254, 1], [203, 208, 218, 222, 1], [123, 133, 208, 213, 1], [123, 133, 144, 160, 0],
  [123, 143, 144, 152, 1], [142, 143, 203, 203, 0], [192, 203, 203, 204, 0], [202, 203, 217, 222, 0],
  [208, 217, 221, 239, 0], [193, 195, 221, 221, 1], [194, 195, 197, 211, 1], [178, 184, 197, 198, 1],
  [161, 177, 183, 184, 1], [167, 174, 177, 179, 1], [165, 167, 174, 180, 1], [134, 167, 168, 168, 1],
  [157, 167, 168, 175, 1], [142, 146, 167, 171, 1], [142, 146, 167, 168, 0], [153, 166, 167, 174, 0],
  [153, 154, 167, 176, 1], [143, 147, 154, 155, 1], [143, 147, 154, 166, 0], [148, 149, 154, 166, 1],
  [149, 149, 172, 176, 0], [169, 172, 172, 175, 0], [169, 173, 185, 194, 0], [181, 185, 194, 194, 0],
  [193, 194, 196, 201, 0], [196, 197, 201, 216, 0], [192, 198, 200, 201, 1], [185, 189, 198, 201, 1],
  [172, 174, 189, 196, 1], [164, 169, 174, 178, 1], [135, 135, 169, 176, 1], [115, 122, 135, 155, 1],
  [70, 74, 122, 126, 1], [56, 60, 78, 92, 1], [53, 60, 70, 82, 0], [56, 60, 80, 84, 1],
  [62, 70, 105, 107, 0], [89, 102, 105, 120, 1], [82, 102, 108, 108, 0], [82, 94, 108, 108, 1],
  [66, 66, 94, 100, 1], [50, 50, 66, 67, 1], [50, 50, 51, 59, 1], [50, 50, 60, 61, 0],
  [55, 58, 60, 63, 1], [55, 58, 60, 79, 0], [50, 50, 59, 63, 1], [50, 50, 51, 61, 1],
  null, null, [50, 50, 51, 61, 1], [50, 50, 51, 62, 1],
  [50, 50, 51, 73, 1], [50, 50, 74, 75, 0], [62, 73, 92, 137, 0], [89, 92, 92, 118, 1],
  [69, 69, 92, 97, 1], [69, 70, 104, 113, 0], [103, 105, 221, 231, 0], [182, 206, 221, 258, 1],
  [154, 196, 206, 209, 1], [182, 196, 241, 247, 0], [226, 233, 241, 262, 1], [202, 224, 233, 261, 1],
  [201, 205, 224, 239, 1], [158, 161, 205, 206, 1], [146, 161, 162, 168, 1], [142, 152, 162, 189, 1],
  [133, 152, 163, 166, 0], [152, 154, 163, 203, 1], [142, 144, 156, 179, 1], [142, 145, 179, 180, 0],
  [147, 172, 179, 184, 1], [170, 171, 213, 217, 0], [184, 196, 213, 219, 1], [168, 172, 196, 202, 1],
  [166, 173, 176, 185, 0], [126, 131, 176, 177, 1], [118, 131, 218, 223, 0], [188, 218, 257, 259, 0],
  [206, 258, 276, 287, 0]
];

const scale = [
  [68, '4.397,50'], [91, '4.395,00'], [113, '4.392,50'], [136, '4.390,00'], [158, '4.387,50'],
  [181, '4.385,00'], [204, '4.382,50'], [249, '4.377,50'], [272, '4.375,00'], [317, '4.370,00'],
  [340, '4.367,50'], [362, '4.365,00'], [385, '4.362,50'], [408, '4.360,00'], [498, '4.350,00'],
  [521, '4.347,50'], [544, '4.345,00'], [566, '4.342,50']
];

const teal = '#2f6f87', purple = '#5b22a8', gray = '#5f6a76', black = '#050505';
const tags = [
  [172, '4.386,00', teal], [194, '4.383,68', black], [215, '4.381,30', purple], [228, '4.379,95', purple],
  [242, '4.378,38', purple], [256, '4.376,81', gray], [284, '4.373,75', purple], [304, '4.371,52', teal],
  [296, '4.372,38', purple], [334, '4.368,17', gray], [366, '4.364,73', black], [392, '4.361,73', black],
  [397, '4.361,24', gray], [419, '4.358,83', black], [422, '4.358,38', purple], [427, '4.357,91', gray],
  [451, '4.355,20', gray], [445, '4.355,94', purple], [468, '4.353,42', gray], [477, '4.352,40', purple],
  [529, '4.346,63', black], [537, '4.345,84', teal], [585, '4.340,40', gray], [589, '4.340,00', gray]
];

function add(parent, name, attrs, text) {
  const el = document.createElementNS(SVG, name);
  for (const key in attrs) el.setAttribute(key, attrs[key]);
  if (text) el.textContent = text;
  parent.appendChild(el);
  return el;
}

const plot = document.getElementById('candles');
candles.forEach((c, i) => {
  if (!c) return;
  const [high, top, bottom, low, up] = c;
  const x = Math.round(38 + i * 3.985) + 0.5;
  const g = add(plot, 'g', i === candles.length - 1 ? { class: 'live' } : {});
  add(g, 'path', { class: 'wick', d: `M${x} ${high}V${low}` });
  add(g, 'rect', {
    class: up ? 'up-body' : 'down-body',
    x: x - 1, y: top + 0.5, width: 2, height: Math.max(bottom - top - 1, 0.5)
  });
});

const axis = document.getElementById('prices');
scale.forEach(([y, label]) => add(axis, 'text', { x: 1209, y: y + 3 }, label));

function tag(y, label, fill, width) {
  add(axis, 'rect', { x: 1204, y: y - 6, width, height: 12, fill });
  const t = add(axis, 'text', { x: 1209, y: y + 3 }, label);
  t.style.fill = '#fff';
  t.style.fontWeight = 'bold';
}
tags.forEach(([y, label, fill]) => tag(y, label, fill, 40));
tag(277, '00:05', '#3a3640', 29);
```
